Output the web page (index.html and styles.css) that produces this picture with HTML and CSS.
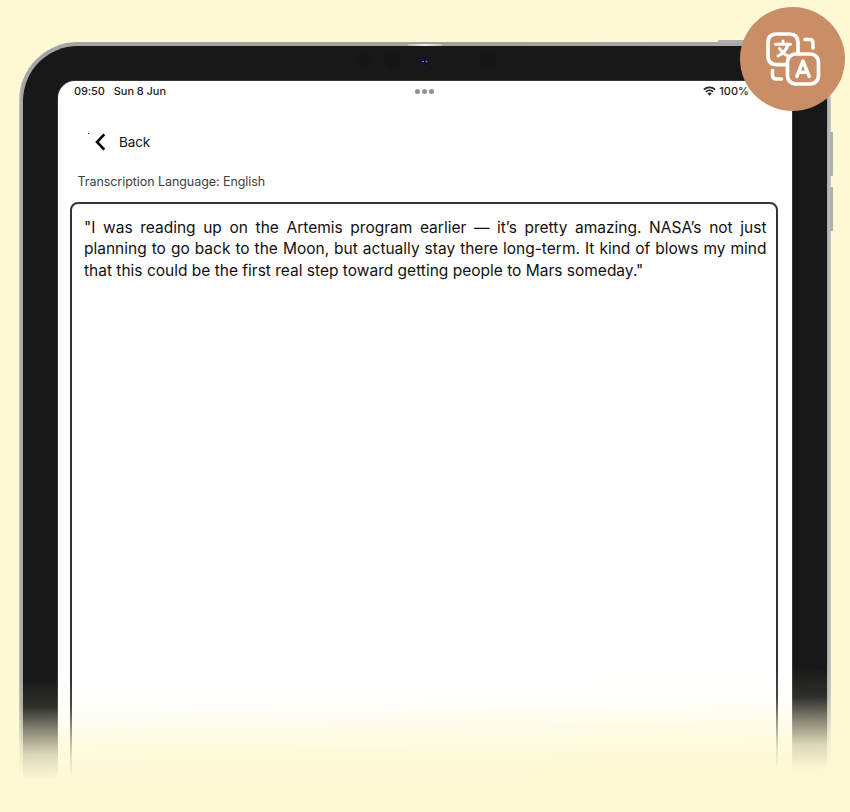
FILE: index.html
```
<!DOCTYPE html>
<html lang="en">
<head>
<meta charset="utf-8">
<title>Transcription</title>
<link rel="stylesheet" href="styles.css">
</head>
<body>
<main class="stage">
  <div class="tablet">
    <span class="side-button top-button"></span>
    <span class="side-button volume-up"></span>
    <span class="side-button volume-down"></span>
    <span class="edge-shine"></span>
    <div class="bezel">
      <span class="sensor sensor-a"></span>
      <span class="sensor sensor-b"></span>
      <span class="sensor sensor-c"></span>
      <span class="camera"></span>
      <div class="screen">
        <header class="status">
          <div class="status-left"><span class="time">09:50</span><span class="date">Sun 8 Jun</span></div>
          <div class="dots"><i></i><i></i><i></i></div>
          <div class="status-right">
            <svg class="wifi" viewBox="0 0 13 10"><path d="M.9 3.6a8.1 8.1 0 0 1 11.2 0M2.9 5.8a5.2 5.2 0 0 1 7.2 0" fill="none" stroke="#222" stroke-width="1.7"/><path d="M6.5 9.8 4.4 7.6a3 3 0 0 1 4.2 0z" fill="#222"/></svg>
            <span class="percent">100%</span>
          </div>
        </header>
        <nav class="back">
          <span class="speck"></span>
          <svg class="chevron" viewBox="0 0 11 18"><path d="M9.3 1.4 2 9l7.3 7.6" fill="none" stroke="#050505" stroke-width="2.6"/></svg>
          <span class="back-label">Back</span>
        </nav>
        <p class="language">Transcription Language: English</p>
        <section class="transcript">
          <p class="line">"I was reading up on the Artemis program earlier — it’s pretty amazing. NASA’s not just</p>
          <p class="line second">planning to go back to the Moon, but actually stay there long-term. It kind of blows my mind</p>
          <p class="line third">that this could be the first real step toward getting people to Mars someday."</p>
        </section>
      </div>
    </div>
  </div>
  <div class="fade"></div>
  <div class="badge">
    <svg class="translate" viewBox="0 0 56 56" fill="none" stroke="#fff" stroke-width="3.700" stroke-linecap="round" stroke-linejoin="round">
      <path d="M20 33.6h-8.500q-8.500 0-8.500-8.500V11.500Q3 3 11.500 3H24.500Q33 3 33 11.500V20.500"/>
      <rect x="22.500" y="23" width="31" height="30" rx="8"/>
      <path d="M40 8.500h4.500q3.500 0 3.500 3.500v5M7.500 39.500v4.500q0 4 4 4h5" stroke-width="3.500"/>
      <path d="M10.500 13.300h15M18 10v3M23 13.500c-1.500 5.500-5.500 9.500-10 11.500M14.500 17.500c2.500 4 5 6.200 8.500 7.500" stroke-width="3"/>
      <path d="m31.800 45.500 6.200-15.500 6.200 15.500M34 41.200h8" stroke-width="3.400"/>
    </svg>
  </div>
</main>
</body>
</html>
```
FILE: styles.css
```
* { box-sizing: border-box; }
body {
  margin: 0;
  background: #fdf9d5;
  color: #111;
  font-family: Inter, "Liberation Sans", sans-serif;
}
p { margin: 0; }
.stage {
  position: relative;
  height: 812px;
  overflow: hidden;
  padding: 42px 19px 0;
}
.tablet {
  position: relative;
  height: 830px;
  padding: 4px;
  border-radius: 59px;
  background: linear-gradient(90deg, #c4c6bf 0, #aaa 2px, #a5a5a5 4px, #a0a2a0 50%, #aaa calc(100% - 4px), #c8c9c4 100%);
}
.bezel {
  height: 822px;
  padding: 35px;
  border-radius: 55px;
  background: #181818;
}
.screen {
  height: 790px;
  border-radius: 17px;
  background: #fff;
  box-shadow: 0 0 0 1px #55555580;
}
.side-button { position: absolute; right: -2px; width: 3px; height: 44px; border-radius: 1px; background: #aeb0ae; }
.volume-up { top: 90px; }
.volume-down { top: 145px; }
.top-button { top: -2px; right: 70px; width: 43px; height: 3px; }
.edge-shine {
  position: absolute;
  top: 2px;
  left: 389px;
  width: 34px;
  height: 2px;
  background: linear-gradient(90deg, #bbb, #eee, #bbb);
}
.sensor { position: absolute; top: 11px; width: 16px; height: 16px; border-radius: 50%; background: #161616; }
.sensor-a { left: 337px; }
.sensor-b { left: 366px; }
.sensor-c { left: 461px; }
.camera {
  position: absolute;
  top: 13px;
  left: 399px;
  width: 13px;
  height: 13px;
  border-radius: 50%;
  background: radial-gradient(circle at 5px 6.500px, #8286b5 0 .7px, transparent 1.200px), radial-gradient(circle at 8.500px 6.500px, #8286b5 0 .7px, transparent 1.200px), radial-gradient(circle, #10102c 0 3px, #1a1c20 6px);
}
.status {
  display: grid;
  grid-template-columns: 1fr auto 1fr;
  align-items: center;
  height: 20px;
  padding: 0 43px 0 16px;
  color: #222;
  font-size: 11px;
  font-weight: 600;
}
.status-left, .status-right { display: flex; align-items: center; }
.status-left { gap: 9px; font-weight: 500; }
.time { letter-spacing: -.1px; }
.date { letter-spacing: -.05px; }
.status-right { justify-content: flex-end; gap: 3px; }
.wifi { width: 13px; height: 10px; }
.percent { font-weight: 500; }
.dots { display: flex; gap: 2px; margin: 1px 0 0 25px; }
.dots i { width: 5px; height: 5px; border-radius: 50%; background: #929292; }
.back { display: flex; align-items: center; height: 20px; margin: 30px 0 0 30px; }
.speck { width: 1px; height: 1px; margin-top: -15px; background: #333; }
.chevron { width: 11px; height: 18px; margin: 1px 0 0 6px; }
.back-label { margin: 2px 0 0 13px; font-size: 13.500px; letter-spacing: -.1px; }
.language { margin: 21px 0 0 19.500px; color: #3e3e3e; font-size: 12.500px; line-height: 20px; letter-spacing: -.06px; }
.transcript {
  height: 690px;
  margin: 10px 14px 0 12px;
  padding: 13px 9.500px 0 12px;
  border: 2px solid #333436;
  border-radius: 8px;
}
.line { font-size: 15.500px; line-height: 21.400px; white-space: nowrap; text-align: justify; text-align-last: justify; }
.third { text-align-last: left; }
.fade {
  position: absolute;
  inset: 650px 0 0;
  background: linear-gradient(179.300deg, #fdf9d500 28px, #fdf9d51a 57px, #fdf9d580 81px, #fdf9d5d9 105px, #fdf9d5 130px);
}
.badge {
  position: absolute;
  top: 7px;
  left: 740px;
  display: flex;
  align-items: center;
  justify-content: center;
  width: 105px;
  height: 104px;
  border-radius: 50%;
  background: #c98e66;
}
.translate { width: 56px; height: 56px; }
```
